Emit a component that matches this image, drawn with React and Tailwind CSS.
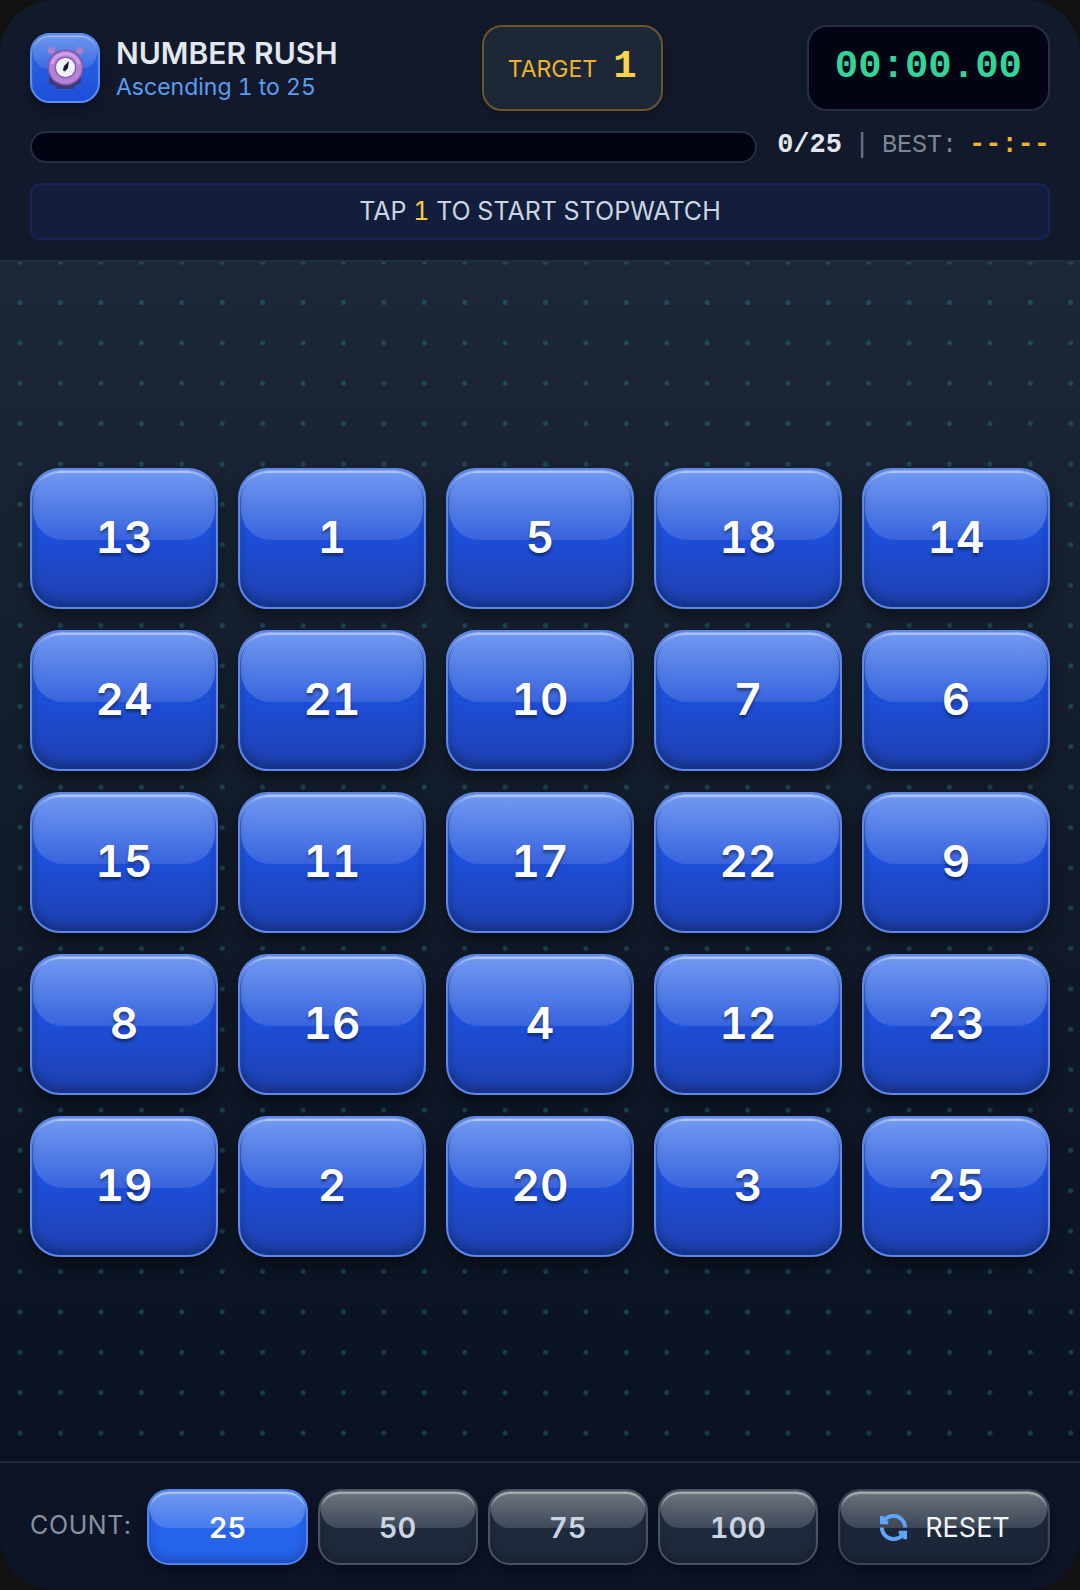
import { useState } from 'react';
import clsx from 'clsx';
import { RefreshCcw } from 'lucide-react';

const COUNTS = [25, 50, 75, 100];

const START_TILES = [
  13, 1, 5, 18, 14,
  24, 21, 10, 7, 6,
  15, 11, 17, 22, 9,
  8, 16, 4, 12, 23,
  19, 2, 20, 3, 25,
];

function ClockIcon() {
  return (
    <svg className="relative w-10 h-11" viewBox="0 0 40 44" aria-hidden="true">
      <path d="M4 29v7q0 2 3 3l4 1v3h18v-3l5-2q2-1 2-3v-6z" fill="#3d3a78" />
      <path d="M9 8l4 5M32 8l-4 5" stroke="#8f5fae" strokeWidth="3" />
      <circle cx="6.5" cy="4.5" r="3.5" fill="#b47cc8" />
      <circle cx="34.5" cy="4.5" r="3.5" fill="#b47cc8" />
      <circle cx="20.5" cy="21.5" r="18" fill="#7f55a6" />
      <circle cx="20.5" cy="21.5" r="16.5" fill="#b682d8" />
      <path d="M7 17a14.5 14.5 0 0 1 27 0" fill="none" stroke="#d0a2e2" strokeWidth="3" strokeLinecap="round" />
      <circle cx="20.5" cy="21.5" r="11" fill="#8a63b4" />
      <circle cx="20.5" cy="21.5" r="9.5" fill="#f1f4f8" />
      <path d="M24 15l-1 7-2.500 3q-2 1-2.500-1l1-4z" fill="#1b1d2b" />
    </svg>
  );
}

// Shiny highlight over the upper half of a button
function Gloss({ className }) {
  return (
    <span
      className={clsx(
        'absolute inset-x-px top-px h-1/2 bg-linear-to-b pointer-events-none',
        className
      )}
    />
  );
}

function Tile({ value, done, onPress }) {
  return (
    <button
      onClick={() => onPress(value)}
      className={clsx(
        'relative aspect-[4/3] flex items-center justify-center pb-1 rounded-[30px] border-2 border-[#5e87e8] bg-linear-to-b from-[#2563eb] via-[#1d4ed8] to-[#1e40af] text-white text-[44px] leading-none font-semibold',
        'shadow-[0_8px_14px_rgba(0,0,0,0.4),inset_0_3px_1px_rgba(255,255,255,0.45),inset_0_-6px_10px_rgba(0,0,0,0.25)] text-shadow-[0_3px_3px_rgba(0,0,0,0.4)]',
        done && 'opacity-30'
      )}
    >
      <Gloss className="rounded-[30px] from-white/35 to-white/12" />
      <span className="relative">{value}</span>
    </button>
  );
}

function CountButton({ value, active, onSelect }) {
  return (
    <button
      onClick={() => onSelect(value)}
      className={clsx(
        'relative flex-1 h-[76px] flex items-center justify-center rounded-[22px] border-2 text-[29px] leading-none font-semibold',
        'shadow-[0_6px_12px_rgba(0,0,0,0.35),inset_0_3px_1px_rgba(255,255,255,0.4),inset_0_-5px_8px_rgba(0,0,0,0.2)]',
        active
          ? 'border-[#4f86ef] bg-[#2563eb] text-white'
          : 'border-[#4b5362] bg-[#1e293b] text-slate-300'
      )}
    >
      <Gloss className="rounded-[20px] from-white/35 to-white/15" />
      <span className="relative">{value}</span>
    </button>
  );
}

export default function App() {
  const [count, setCount] = useState(25);
  const [tiles, setTiles] = useState(START_TILES);
  const [next, setNext] = useState(1);

  const press = (value) => {
    if (value === next) setNext(next + 1);
  };

  const start = (n) => {
    setCount(n);
    setNext(1);
    setTiles(n === 25 ? START_TILES : Array.from({ length: n }, (_, i) => ((i * 37) % n) + 1));
  };

  return (
    <div className="bg-[#111111] font-[Inter,sans-serif] tabular-nums">
      <div className="min-h-screen flex flex-col overflow-hidden rounded-[54px] bg-[#0f172a]">
        <header className="relative z-10 flex flex-col gap-5 px-[30px] pt-[25px] pb-5 bg-[#11192b] border-b-2 border-[#222e3f]">
          <div className="flex items-center justify-between">
            <div className="flex items-center gap-4">
              <div className="relative size-[70px] flex items-center justify-center rounded-[20px] border-2 border-[#5b8cf0] bg-linear-to-b from-[#2f68e6] to-[#1d4ed8] shadow-[0_8px_14px_rgba(0,0,0,0.3),inset_0_2px_1px_rgba(255,255,255,0.4)]">
                <Gloss className="rounded-[18px] from-white/30 to-white/10" />
                <ClockIcon />
              </div>
              <div className="pt-1.5">
                <h1 className="text-[30px] leading-8 font-semibold text-slate-200">NUMBER RUSH</h1>
                <p className="text-[23px] leading-9 text-[#5b9df0]">Ascending 1 to 25</p>
              </div>
            </div>

            <div className="flex items-baseline gap-4 px-6 pt-4 pb-[18px] rounded-[20px] border-2 border-[#6d5528] bg-[#1c2738] shadow-[0_4px_12px_rgba(0,0,0,0.2)]">
              <span className="text-[23px] leading-8 text-[#f0b429]">TARGET</span>
              <span className="font-['Liberation_Mono',monospace] text-[39px] leading-[48px] font-bold text-[#fcd34d]">
                {Math.min(next, count)}
              </span>
            </div>

            <div className="px-[26px] pt-4 pb-[18px] rounded-[20px] border-2 border-[#272f40] bg-[#020414] font-['Liberation_Mono',monospace] text-[39px] leading-[48px] font-bold text-[#34d399]">
              00:00.00
            </div>
          </div>

          <div className="flex items-start gap-5">
            <div
              role="progressbar"
              aria-label="Progress"
              aria-valuemin={0}
              aria-valuemax={count}
              aria-valuenow={next - 1}
              className="flex-1 h-8 rounded-full border-2 border-[#272f40] bg-[#020414] overflow-hidden"
            >
              <div className="h-full bg-blue-500" style={{ width: `${((next - 1) / count) * 100}%` }} />
            </div>
            <div className="flex items-baseline gap-3 font-['Liberation_Mono',monospace] text-[27px] leading-7">
              <span className="font-bold text-slate-200">{next - 1}/{count}</span>
              <span className="w-4 text-center text-slate-500">|</span>
              <span className="text-[25px] leading-7 text-[#7d8799]">BEST:</span>
              <span className="font-bold text-[#f0b429]">--:--</span>
            </div>
          </div>

          <div className="h-[57px] flex items-center justify-center pb-0.5 rounded-[10px] border-2 border-[#1a2357] bg-[#131d3c] text-[25px] leading-9 text-slate-300">
            <p>
              TAP <span className="text-[#fcc93d]">{Math.min(next, count)}</span> TO START STOPWATCH
            </p>
          </div>
        </header>

        <main className="relative flex-1 flex flex-col justify-center px-[30px] pt-0.5 bg-linear-to-b from-[#1c2738] via-[#111a29] to-[#0a1222]">
          <div className="absolute -top-5 -bottom-[33px] left-0 -right-[11px] bg-[radial-gradient(circle,rgba(45,150,165,0.32)_2px,transparent_3px)] bg-size-[40px_40px] bg-repeat-round" />
          <div className="relative grid grid-cols-5 gap-x-5 gap-y-[21px]">
            {tiles.map((value) => (
              <Tile key={value} value={value} done={value < next} onPress={press} />
            ))}
          </div>
        </main>

        <footer className="relative flex items-center px-[30px] pt-[26px] pb-[25px] bg-[#0d1426] border-t-2 border-[#202a3b]">
          <span className="pb-1 text-[25px] leading-9 tracking-wide text-[#8791a3]">COUNT:</span>
          <div className="flex-1 flex gap-2.5 ml-4">
            {COUNTS.map((n) => (
              <CountButton key={n} value={n} active={n === count} onSelect={start} />
            ))}
          </div>
          <button
            onClick={() => start(count)}
            className="relative ml-5 w-[212px] h-[76px] flex items-center justify-center gap-4 rounded-[22px] border-2 border-[#3b4556] bg-[#1b2638] text-[27px] leading-none text-slate-100 shadow-[0_6px_12px_rgba(0,0,0,0.35),inset_0_3px_1px_rgba(255,255,255,0.4),inset_0_-5px_8px_rgba(0,0,0,0.2)]"
          >
            <Gloss className="rounded-[20px] from-white/35 to-white/15" />
            <RefreshCcw className="relative text-[#60a5fa]" size={31} strokeWidth={3} strokeLinecap="butt" strokeLinejoin="miter" />
            <span className="relative">RESET</span>
          </button>
        </footer>
      </div>
    </div>
  );
}
